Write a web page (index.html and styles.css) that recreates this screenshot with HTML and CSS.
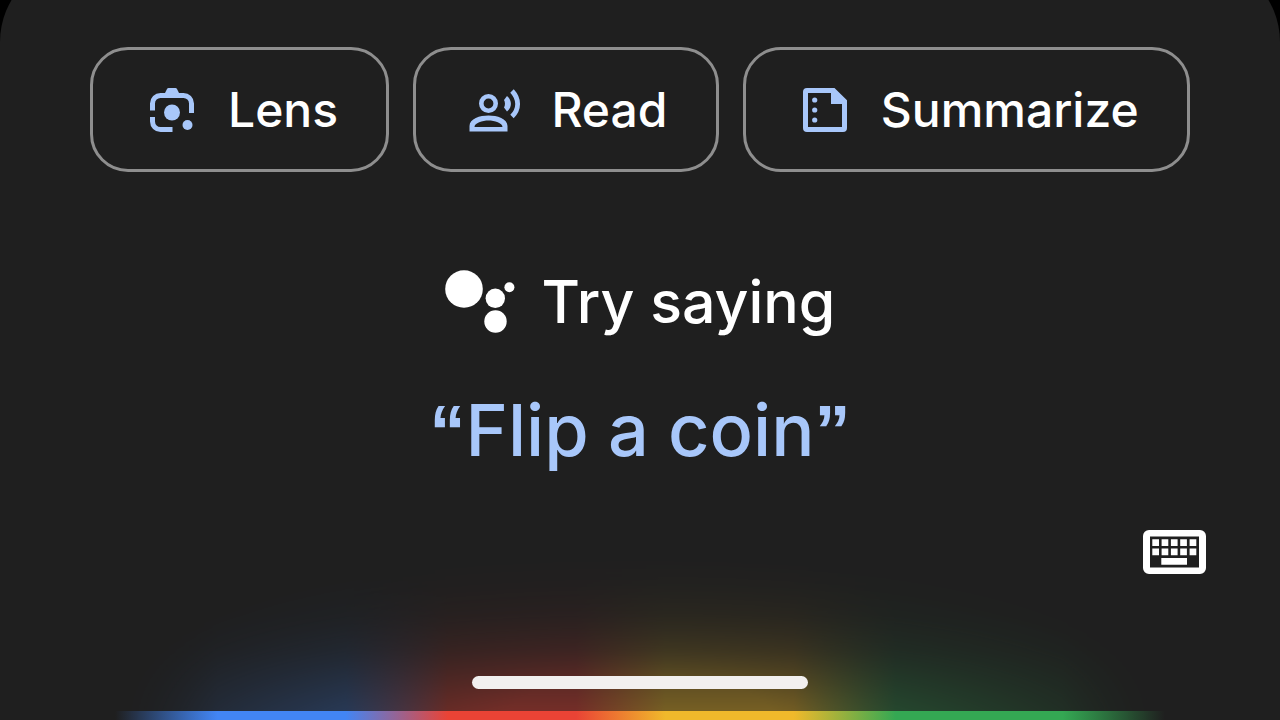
FILE: index.html
```html
<!DOCTYPE html>
<html lang="en">
<head>
<meta charset="utf-8">
<meta name="viewport" content="width=device-width, initial-scale=1">
<title>Assistant</title>
<link rel="stylesheet" href="styles.css">
</head>
<body>
<main class="panel">
  <div class="chips">
    <button class="chip" type="button">
      <svg class="chip-icon" viewBox="0 0 52 46" aria-hidden="true">
        <g fill="none" stroke="currentColor" stroke-width="5">
          <path d="M6.5 23.5v-7a8 8 0 0 1 8-8h23a8 8 0 0 1 8 8v9.500"/>
          <path d="M6.500 30v4.500a8 8 0 0 0 8 8H26.500"/>
        </g>
        <path fill="currentColor" d="M18.500 7l2.500-5q.5-1 1.500-1h7q1 0 1.500 1l2.500 5z"/>
        <circle fill="currentColor" cx="26" cy="25.500" r="8"/>
        <circle fill="currentColor" cx="41.500" cy="38" r="5"/>
      </svg>
      <span>Lens</span>
    </button>
    <button class="chip" type="button">
      <svg class="chip-icon" viewBox="0 0 52 46" aria-hidden="true">
        <circle cx="19.500" cy="16.500" r="7.200" fill="none" stroke="currentColor" stroke-width="4.600"/>
        <path fill="currentColor" fill-rule="evenodd" d="M.5 44.500V39C.5 31.500 11 28.500 19.500 28.500S38.500 31.500 38.500 39v5.500zM5.500 40h28c0-4-8-6.500-14-6.500S5.500 36 5.500 40z"/>
        <path fill="currentColor" d="M35 13l3-4c5.200 4.200 5.200 11.400 0 15.600l-3-4c1.300-2.300 1.300-5.300 0-7.600z"/>
        <path fill="none" stroke="currentColor" stroke-width="4.800" d="M43 4c7.500 8 7.500 18 0 25.500"/>
      </svg>
      <span>Read</span>
    </button>
    <button class="chip" type="button">
      <svg class="chip-icon" viewBox="0 0 52 46" aria-hidden="true">
        <path fill="currentColor" fill-rule="evenodd" d="M8 1h27.500L48 13.300V41a4 4 0 0 1-4 4H8a4 4 0 0 1-4-4V5a4 4 0 0 1 4-4zm1 5v34h34V17H32V6z"/>
        <g fill="currentColor">
          <circle cx="15.700" cy="13" r="2.600"/>
          <circle cx="15.700" cy="23" r="2.600"/>
          <circle cx="15.700" cy="33" r="2.600"/>
        </g>
      </svg>
      <span>Summarize</span>
    </button>
  </div>

  <section class="prompt">
    <h1 class="prompt-title">
      <svg class="logo" viewBox="0 0 70 64" aria-hidden="true" fill="currentColor">
        <circle cx="19" cy="19" r="18.800"/>
        <circle cx="50.300" cy="28.300" r="9.700"/>
        <circle cx="50.500" cy="51.500" r="11.200"/>
        <circle cx="64.400" cy="17.200" r="5"/>
      </svg>
      <span>Try saying</span>
    </h1>
    <p class="suggestion"><span class="quote">“</span>Flip a coin<span class="quote">”</span></p>
  </section>

  <div class="tools">
    <button class="keyboard" type="button" aria-label="Open keyboard">
      <svg class="keyboard-icon" viewBox="0 0 63 44" aria-hidden="true">
        <path fill="currentColor" fill-rule="evenodd" d="M6 0h51a6 6 0 0 1 6 6v32a6 6 0 0 1-6 6H6a6 6 0 0 1-6-6V6a6 6 0 0 1 6-6zm1 6.500v31h49v-31z"/>
        <path fill="currentColor" d="M9.300 9.300h6.700v6.700H9.300zM18.600 9.300h6.700v6.700h-6.700zM27.900 9.300h6.700v6.700h-6.700zM37.200 9.300h6.700v6.700h-6.700zM46.600 9.300h6.700v6.700h-6.700zM9.300 18.600h6.700v6.700H9.300zM18.600 18.600h6.700v6.700h-6.700zM27.900 18.600h6.700v6.700h-6.700zM37.200 18.600h6.700v6.700h-6.700zM46.600 18.600h6.700v6.700h-6.700zM18.300 28h25.700v6.700H18.300z"/>
      </svg>
    </button>
  </div>

  <div class="glow"></div>
  <div class="light-bar"></div>
  <div class="home-handle"></div>
</main>
</body>
</html>
```
FILE: styles.css
```css
* {
  box-sizing: border-box;
}

:root {
  --surface: #1f1f1f;
  --accent: #a8c7fa;
  --spectrum: transparent 9%, #4285f4 17%, #4285f4 27%, #ea4335 35%, #ea4335 45%, #f0b92b 52%, #f0b92b 62%, #34a853 70%, #34a853 83%, transparent 91%;
}

body {
  margin: 0;
  background: #000;
  color: #fff;
  font-family: Inter, "Liberation Sans", sans-serif;
  font-weight: 500;
  overflow: hidden;
}

.panel {
  position: relative;
  display: flex;
  flex-direction: column;
  min-height: calc(100vh + 40px);
  margin-top: -40px;
  padding-top: 87px;
  background: var(--surface);
  border-radius: 82px 82px 0 0;
}

.chips {
  display: flex;
  justify-content: center;
  gap: 24px;
  padding: 0 90px;
}

.chip {
  display: flex;
  flex: 1 1 auto;
  align-items: center;
  gap: 30px;
  height: 125px;
  padding: 0 0 0 53px;
  border: 3px solid #8e8e8e;
  border-radius: 38px;
  background: none;
  color: #fff;
  font: inherit;
  font-size: 48px;
  line-height: 60px;
}

.chip-icon {
  flex: none;
  width: 52px;
  height: 46px;
  color: var(--accent);
}

.prompt {
  display: flex;
  flex-direction: column;
  align-items: center;
  gap: 48px;
  padding-top: 90px;
}

.prompt-title {
  display: flex;
  align-items: center;
  gap: 27px;
  margin: 0;
  font-size: 59px;
  font-weight: 500;
  line-height: 80px;
}

.logo {
  width: 70px;
  height: 64px;
}

.suggestion {
  margin: 0;
  color: var(--accent);
  font-size: 72px;
  line-height: 80px;
}

.quote {
  font-family: "Liberation Sans", sans-serif;
  font-weight: 700;
  line-height: 1;
}

.tools {
  display: flex;
  justify-content: flex-end;
  padding: 60px 74px 0;
}

.keyboard {
  display: flex;
  padding: 0;
  border: 0;
  background: none;
  color: #fff;
}

.keyboard-icon {
  width: 63px;
  height: 44px;
}

.glow,
.light-bar {
  position: absolute;
  right: 0;
  bottom: 0;
  left: 0;
  background: linear-gradient(to right, var(--spectrum));
}

.glow {
  height: 180px;
  opacity: 0.45;
  pointer-events: none;
  mask-image:
    radial-gradient(ellipse 42% 100% at 50% 100%, #000 25%, transparent),
    linear-gradient(to top, #000, rgba(0, 0, 0, 0.42) 38%, rgba(0, 0, 0, 0.22) 58%, transparent);
  mask-composite: intersect;
}

.light-bar {
  height: 9px;
}

.home-handle {
  position: absolute;
  bottom: 31px;
  left: 50%;
  width: 336px;
  height: 13px;
  margin-left: -168px;
  border-radius: 7px;
  background: #f2f0ef;
}
```
